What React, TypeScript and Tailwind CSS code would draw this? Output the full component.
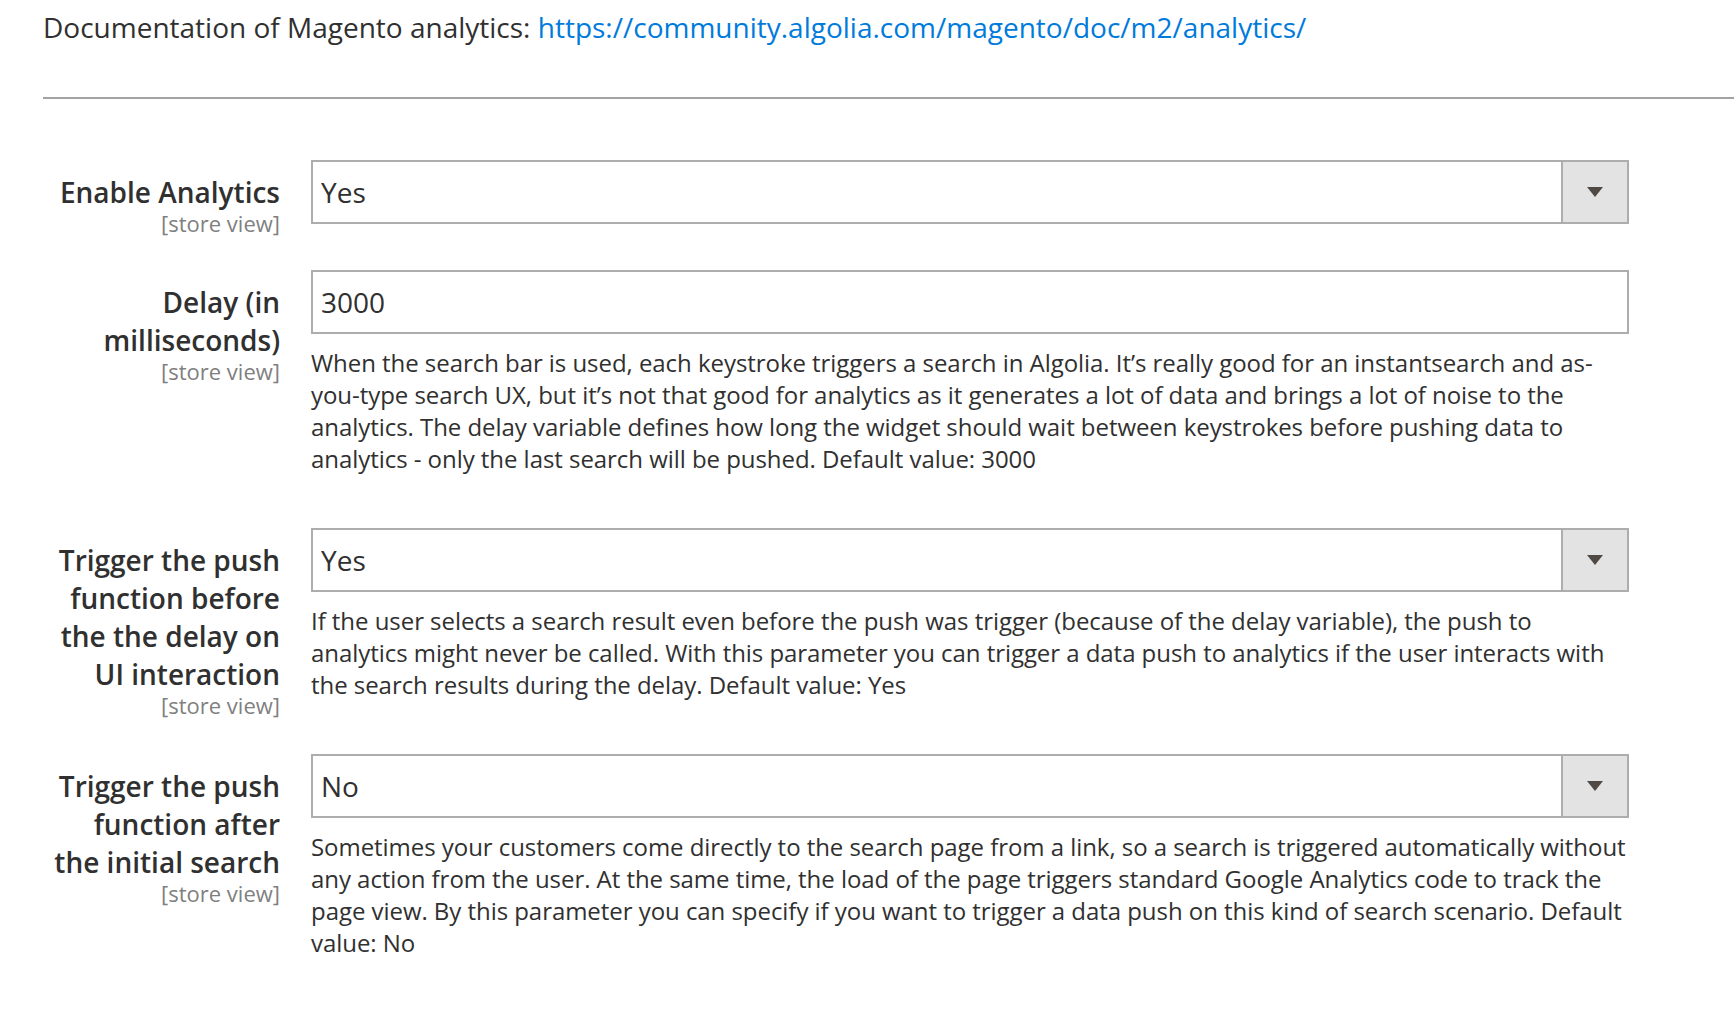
import React from "react";

type Row = {
  label: string[];
  kind: "select" | "input";
  value: string;
  note?: string[];
};

const rows: Row[] = [
  { label: ["Enable Analytics"], kind: "select", value: "Yes" },
  {
    label: ["Delay (in", "milliseconds)"],
    kind: "input",
    value: "3000",
    note: [
      "When the search bar is used, each keystroke triggers a search in Algolia. It’s really good for an instantsearch and as-",
      "you-type search UX, but it’s not that good for analytics as it generates a lot of data and brings a lot of noise to the",
      "analytics. The delay variable defines how long the widget should wait between keystrokes before pushing data to",
      "analytics - only the last search will be pushed. Default value: 3000",
    ],
  },
  {
    label: ["Trigger the push", "function before", "the the delay on", "UI interaction"],
    kind: "select",
    value: "Yes",
    note: [
      "If the user selects a search result even before the push was trigger (because of the delay variable), the push to",
      "analytics might never be called. With this parameter you can trigger a data push to analytics if the user interacts with",
      "the search results during the delay. Default value: Yes",
    ],
  },
  {
    label: ["Trigger the push", "function after", "the initial search"],
    kind: "select",
    value: "No",
    note: [
      "Sometimes your customers come directly to the search page from a link, so a search is triggered automatically without",
      "any action from the user. At the same time, the load of the page triggers standard Google Analytics code to track the",
      "page view. By this parameter you can specify if you want to trigger a data push on this kind of search scenario. Default",
      "value: No",
    ],
  },
];

function Field({ row }: { row: Row }) {
  return (
    <div className="flex pb-[35px]">
      <div className="w-[237px] shrink-0 pt-[13px] text-right">
        {row.label.map((l, i) => (
          <div key={i} className="whitespace-nowrap text-[28px] leading-[38px] font-semibold text-[#303030]">
            {l}
          </div>
        ))}
        <div className="text-[22px] leading-[24px] text-[#808080]">[store view]</div>
      </div>
      <div className="ml-[31px] w-[1318px] shrink-0">
        <div className="flex h-[64px] w-full items-stretch border-2 border-[#adadad] bg-white">
          <div className="flex flex-1 items-center pl-[8px] text-[28px] text-[#303030]">{row.value}</div>
          {row.kind === "select" && (
            <div className="flex w-[66px] items-center justify-center border-l-2 border-[#adadad] bg-[#e3e3e3]">
              <svg width="16" height="10" viewBox="0 0 16 10">
                <polygon points="0,0 16,0 8,10" fill="#514943" />
              </svg>
            </div>
          )}
        </div>
        {row.note && (
          <div className="mt-[13px] mb-[18px] text-[24px] leading-[32px] tracking-[-0.05px] text-[#303030]">
            {row.note.map((n, i) => (
              <div key={i} className="whitespace-nowrap">
                {n}
              </div>
            ))}
          </div>
        )}
      </div>
    </div>
  );
}

export default function App() {
  return (
    <div className="min-h-[1024px] w-[1734px] bg-white pl-[43px] pt-[8px]" style={{ fontFamily: '"Open Sans", sans-serif' }}>
      <div className="text-[28px] leading-[38px] text-[#303030]">
        Documentation of Magento analytics:{" "}
        <a className="text-[#007bdb]" href="#">
          https://community.algolia.com/magento/doc/m2/analytics/
        </a>
      </div>
      <div className="mt-[51px] h-[2px] bg-[#a3a3a3]" />
      <div className="mt-[61px]">
        {rows.map((r, i) => (
          <Field key={i} row={r} />
        ))}
      </div>
    </div>
  );
}
